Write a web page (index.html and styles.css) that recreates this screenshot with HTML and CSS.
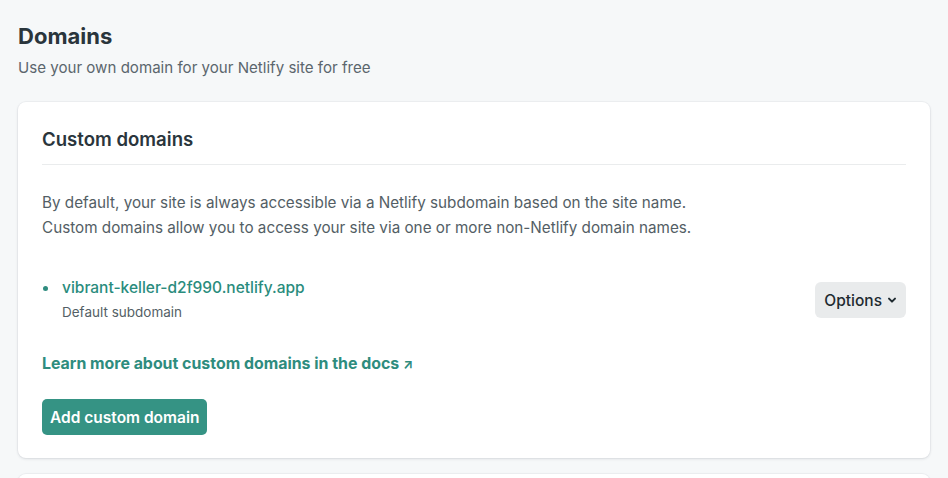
FILE: index.html
```html
<!DOCTYPE html>
<html lang="en">
<head>
<meta charset="utf-8">
<title>Domains</title>
<link rel="stylesheet" href="styles.css">
</head>
<body>
<main class="page">
  <header class="page-head">
    <h1 class="page-title">Domains</h1>
    <p class="page-sub">Use your own domain for your Netlify site for free</p>
  </header>
  <section class="card">
    <h2 class="card-title">Custom domains</h2>
    <div class="card-body">
      <p class="desc">By default, your site is always accessible via a Netlify subdomain based on the site name.<br>Custom domains allow you to access your site via one or more non-Netlify domain names.</p>
      <ul class="domain-list">
        <li class="domain-item">
          <div class="domain-info">
            <a class="domain-link" href="#">vibrant-keller-d2f990.netlify.app</a>
            <span class="domain-note">Default subdomain</span>
          </div>
          <button class="btn-options" type="button">Options
            <svg class="chev" width="10" height="10" viewBox="0 0 10 10"><path d="M2 3.6 L5 6.6 L8 3.6" fill="none" stroke="currentColor" stroke-width="2" stroke-linecap="round" stroke-linejoin="round"/></svg>
          </button>
        </li>
      </ul>
      <a class="docs-link" href="#">Learn more about custom domains in the docs <span class="arrow">↗</span></a>
      <div class="actions">
        <button class="btn-primary" type="button">Add custom domain</button>
      </div>
    </div>
  </section>
  <section class="card card-next"></section>
</main>
</body>
</html>
```
FILE: styles.css
```css
* { box-sizing: border-box; }
html, body { margin: 0; padding: 0; }
body {
  background: #f6f8f9;
  font-family: Inter, "Noto Sans", "Liberation Sans", sans-serif;
  color: #2e3a41;
  overflow: hidden;
}
.page { padding: 22px 18px 0 18px; }
.page-head { margin-bottom: 22px; }
.page-title {
  margin: 0;
  font-size: 22px;
  line-height: 28px;
  font-weight: 700;
  color: #2a353c;
}
.page-sub {
  margin: 6px 0 0;
  font-size: 15.1px;
  line-height: 24px;
  color: #5b666d;
}
.card {
  background: #fff;
  border-radius: 8px;
  box-shadow: 0 1px 3px rgba(30, 45, 55, 0.12), 0 0 0 1px rgba(30, 45, 55, 0.03);
  padding: 24px 24px 23px;
}
.card-title {
  margin: 0;
  font-size: 18.6px;
  line-height: 26px;
  font-weight: 600;
  color: #2a353c;
  padding-bottom: 12px;
  border-bottom: 1px solid #eaeced;
}
.card-body { padding-top: 25px; }
.desc {
  margin: 0;
  font-size: 15.25px;
  line-height: 25px;
  color: #535e65;
}
.domain-list { list-style: none; margin: 36px 0 0; padding: 0; }
.domain-item {
  display: flex;
  align-items: center;
  justify-content: space-between;
}
.domain-info {
  display: flex;
  flex-direction: column;
  padding-left: 20px;
  position: relative;
}
.domain-info::before {
  content: "";
  position: absolute;
  left: 1px;
  top: 10px;
  width: 5px;
  height: 5px;
  border-radius: 50%;
  background: #2f8c7f;
}
.domain-link {
  font-size: 15.5px;
  line-height: 24px;
  font-weight: 500;
  color: #2a8c7d;
  text-decoration: none;
}
.domain-note {
  font-size: 13.5px;
  line-height: 24px;
  color: #545f66;
}
.btn-options {
  display: inline-flex;
  align-items: center;
  gap: 5px;
  height: 36px;
  padding: 0 9px 0 9px;
  border: 0;
  border-radius: 6px;
  background: #e9ebec;
  color: #1f2a30;
  font-family: inherit;
  font-size: 15.5px;
  font-weight: 500;
}
.chev { display: block; }
.docs-link {
  display: block;
  margin-top: 28px;
  font-size: 15.9px;
  line-height: 24px;
  font-weight: 700;
  color: #2e8c7e;
  text-decoration: none;
}
.arrow { font-size: 13px; font-weight: 700; }
.actions { margin-top: 23px; }
.btn-primary {
  height: 36px;
  padding: 0 8px;
  border: 0;
  border-radius: 5px;
  background: #359384;
  color: #fff;
  font-family: inherit;
  font-size: 15.5px;
  font-weight: 600;
}
.card-next { margin-top: 16px; height: 40px; padding: 0; }
```
